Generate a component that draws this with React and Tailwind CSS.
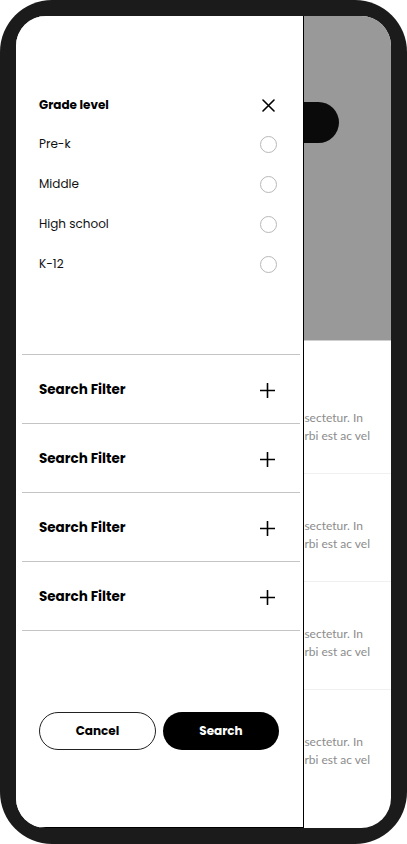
import React from "react";

const font = { fontFamily: "Poppins, Inter, 'Noto Sans', sans-serif" };

function XIcon() {
  return (
    <svg width="13" height="13" viewBox="0 0 13 13" fill="none">
      <path d="M1 1L12 12M12 1L1 12" stroke="#000" strokeWidth="1.6" strokeLinecap="round" />
    </svg>
  );
}

function PlusIcon() {
  return (
    <svg width="15" height="15" viewBox="0 0 15 15" fill="none">
      <path d="M7.5 0.5V14.5M0.5 7.5H14.5" stroke="#000" strokeWidth="1.6" strokeLinecap="round" />
    </svg>
  );
}

function Radio() {
  return <div className="w-[17px] h-[17px] rounded-full border-[1.5px] border-[#b8b8b8]" />;
}

function BgRow({ last }) {
  return (
    <div
      className={
        "h-[108px] pt-[43px] text-[12px] leading-[18px] text-[#8c8c8c] font-['Lato',sans-serif] " +
        (last ? "" : "border-b border-[#f0f0f0]")
      }
    >
      <div className="whitespace-nowrap text-right pr-[28px]">consectetur. In</div>
      <div className="whitespace-nowrap text-right pr-[21px]">morbi est ac vel</div>
    </div>
  );
}

export default function App() {
  const options = ["Pre-k", "Middle", "High school", "K-12"];
  return (
    <div className="w-[407px] h-[844px] bg-white">
      <div className="h-full rounded-[52px] bg-[#1b1b1b] p-4">
        <div className="relative h-full rounded-[30px] overflow-hidden bg-white">
          {/* background page */}
          <div className="flex flex-col">
            <div className="h-[325px] bg-[#999999] pt-[86px] border-b border-[#cfcfcf]">
              <div className="ml-[203px] w-[120px] h-[41px] rounded-full bg-[#0a0a0a]" />
            </div>
            <div className="h-[25px]" />
            <BgRow />
            <BgRow />
            <BgRow />
            <BgRow last />
          </div>

          {/* drawer */}
          <div className="absolute left-0 top-0 bottom-0 w-[288px] bg-white border-r border-b border-black flex flex-col" style={font}>
            <div className="pt-[70px]">
              <div className="flex items-center justify-between h-[38px] pl-[23px] pr-[28px]">
                <span className="text-[12px] font-bold text-black">Grade level</span>
                <XIcon />
              </div>
              {options.map((o) => (
                <div key={o} className="flex items-center justify-between h-10 pl-[23px] pr-[26px]">
                  <span className="text-[12px] text-[#111]">{o}</span>
                  <Radio />
                </div>
              ))}
            </div>
            <div className="mt-[70px]">
              {[0, 1, 2, 3].map((i) => (
                <div key={i}>
                  <div className="ml-[6px] mr-[3px] h-px bg-[#c4c4c4]" />
                  <div className="flex items-center justify-between h-[68px] pt-[2px] pl-[23px] pr-[28px]">
                    <span className="text-[13.5px] font-bold text-black">Search Filter</span>
                    <PlusIcon />
                  </div>
                </div>
              ))}
              <div className="ml-[6px] mr-[3px] h-px bg-[#c4c4c4]" />
            </div>
            <div className="flex gap-[7px] pl-[23px] mt-[81px]">
              <button className="w-[117px] h-[38px] rounded-full border border-[#222] bg-white text-[12px] font-bold text-black">
                Cancel
              </button>
              <button className="w-[116px] h-[38px] rounded-full bg-black text-[12px] font-bold text-white">
                Search
              </button>
            </div>
          </div>
        </div>
      </div>
    </div>
  );
}
